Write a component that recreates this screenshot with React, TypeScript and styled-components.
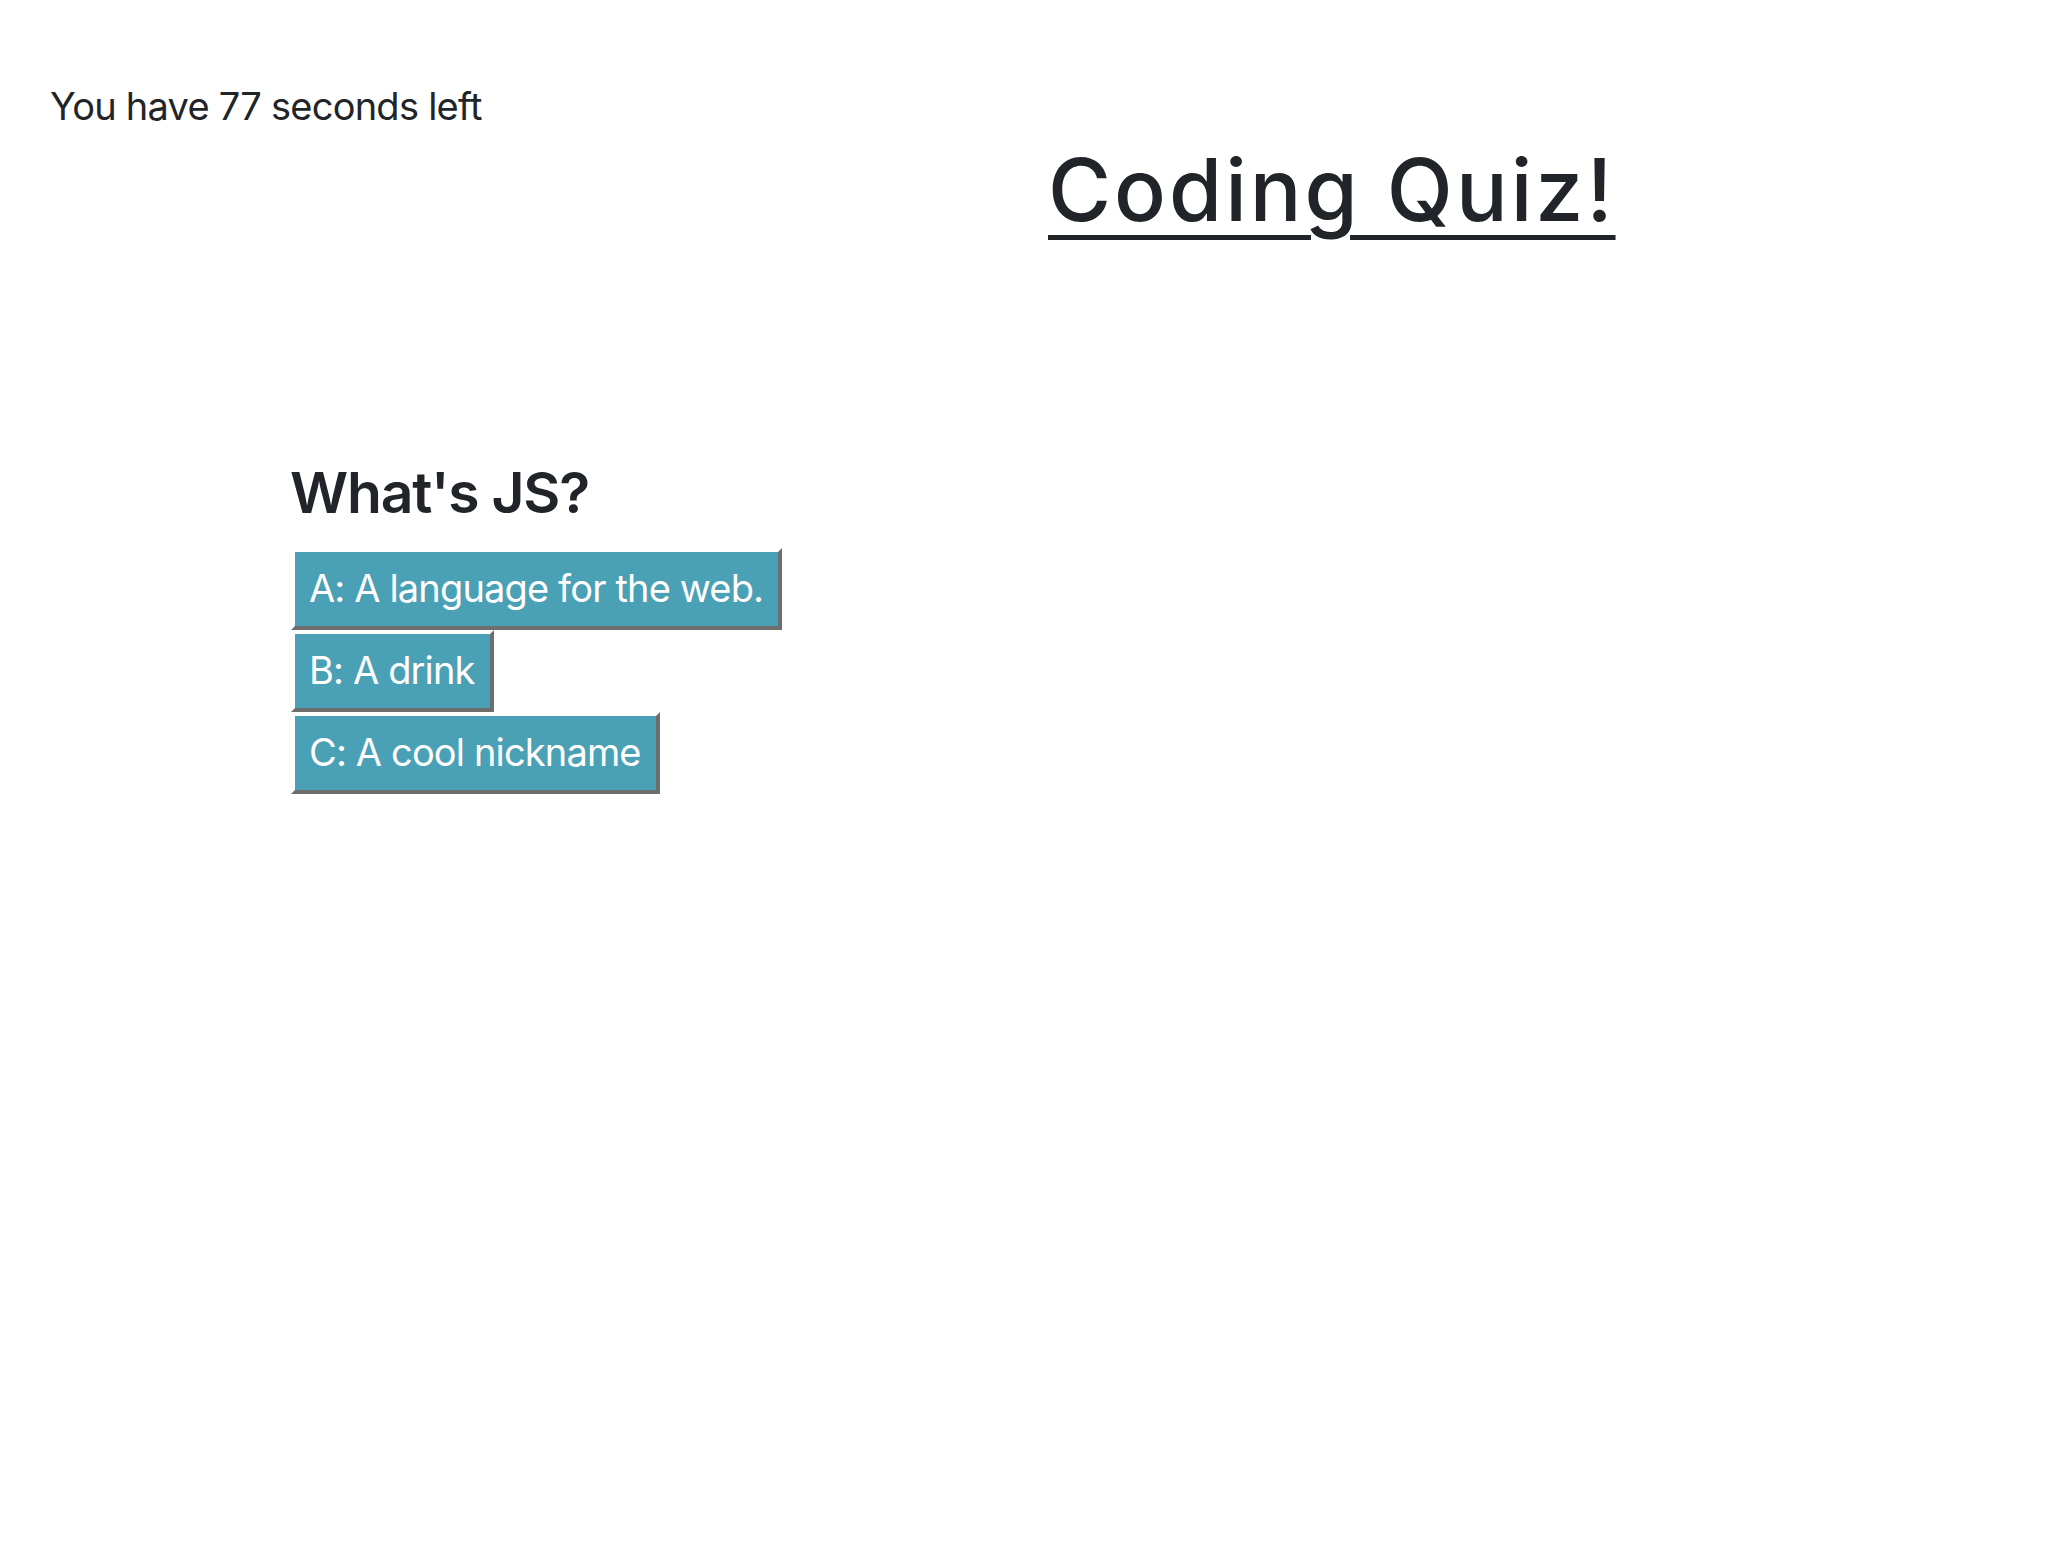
import React from "react";
import styled, { createGlobalStyle } from "styled-components";

const GlobalStyle = createGlobalStyle`
  html, body {
    margin: 0;
    padding: 0;
    background: #ffffff;
  }
  body {
    font-family: Inter, "Noto Sans", "Liberation Sans", sans-serif;
    color: #212529;
  }
  * { box-sizing: border-box; }
`;

const Page = styled.main`
  display: flex;
  flex-direction: column;
  min-height: 1544px;
`;

const Timer = styled.p`
  margin: 78px 0 0 50px;
  font-size: 38px;
  line-height: 57px;
  font-weight: 400;
  letter-spacing: -0.75px;
`;

const TitleRow = styled.header`
  display: grid;
  grid-template-columns: 1048px auto;
  margin-top: 4px;
`;

const Title = styled.h1`
  grid-column: 2;
  margin: 0;
  font-size: 86px;
  line-height: 1.2;
  font-weight: 500;
  letter-spacing: 3px;
  text-decoration: underline;
  text-decoration-thickness: 5px;
  text-underline-offset: 14px;
`;

const QuestionBlock = styled.section`
  display: flex;
  flex-direction: column;
  align-items: flex-start;
  margin: 216px 0 0 290px;
`;

const Question = styled.h4`
  margin: 0 0 20px 0;
  font-size: 57px;
  line-height: 70px;
  font-weight: 600;
  letter-spacing: -1.2px;
`;

const Answers = styled.div`
  display: flex;
  flex-direction: column;
  align-items: flex-start;
  margin-left: 1px;
`;

const AnswerButton = styled.button`
  display: block;
  margin: 0;
  padding: 8px 15px 9px 14px;
  font-family: inherit;
  font-size: 38px;
  line-height: 57px;
  letter-spacing: -0.85px;
  color: #ffffff;
  background: #4aa0b5;
  border-width: 4px;
  border-style: solid;
  border-color: #ffffff #6e6e6e #6e6e6e #ffffff;
  border-radius: 0;
  cursor: pointer;
`;

const answers = ["A: A language for the web.", "B: A drink", "C: A cool nickname"];

export default function App() {
  return (
    <>
      <GlobalStyle />
      <Page>
        <Timer>You have 77 seconds left</Timer>
        <TitleRow>
          <Title>Coding Quiz!</Title>
        </TitleRow>
        <QuestionBlock>
          <Question>What's JS?</Question>
          <Answers>
            {answers.map((a) => (
              <AnswerButton key={a}>{a}</AnswerButton>
            ))}
          </Answers>
        </QuestionBlock>
      </Page>
    </>
  );
}
